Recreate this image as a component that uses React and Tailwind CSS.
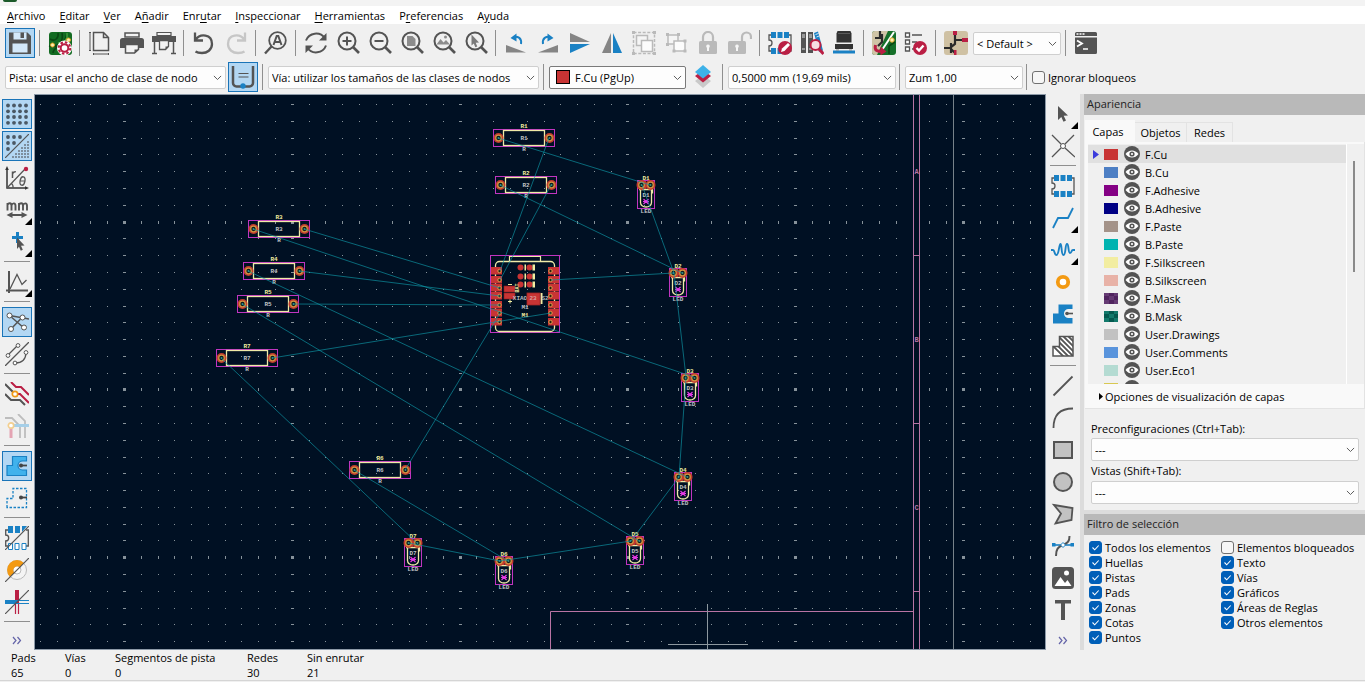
import { useState } from 'react';
import clsx from 'clsx';

const D = '#545454';
const B = '#1a81c4';
const R = '#ba1f44';
const G = '#bababa';

const MENUS = [
  ['', 'A', 'rchivo'],
  ['', 'E', 'ditar'],
  ['', 'V', 'er'],
  ['A', 'ñ', 'adir'],
  ['Enr', 'u', 'tar'],
  ['', 'I', 'nspeccionar'],
  ['', 'H', 'erramientas'],
  ['P', 'r', 'eferencias'],
  ['A', 'y', 'uda'],
];

const magnifier = (
  <>
    <circle cx="11" cy="10" r="8.500" fill="none" stroke={D} strokeWidth="2" />
    <path d="M17 16l6 6" stroke={D} strokeWidth="2.600" />
  </>
);

const footprint = (
  <>
    <path d="M3 4H1v5a3 3 0 0 1 0 6v5h2M21 4h2v16h-2" fill="none" stroke={D} strokeWidth="1.300" />
    <path d="M3 1h5v6H3zM9.500 1h5v6h-5zM16 1h5v6h-5zM3 17h5v6H3zM9.500 17h5v6h-5zM16 17h5v6h-5z" fill={B} />
  </>
);

const zoneShape = 'M2 21.500V11.500H7.500V2.500H21.500V7H17.500a4.500 4.500 0 1 0 0 9H21.500V21.500z';

const ICONS = {
  save: (
    <>
      <path d="M1 1.500h18.500l3.500 3.500v18H1z" fill={D} />
      <path d="M5.500 1.500h13v7h-13zM4.500 12.500h15v9h-15z" fill="#d4e9fa" />
      <path d="M12.500 1.500h3.500v5.500h-3.500z" fill={D} />
    </>
  ),
  board: (
    <>
      <rect width="23" height="23" x="1" y="1" rx="3" fill="#136b22" />
      <path d="M2 8c5 3 9-1 8-6M1 15c8 2 15-4 13-13M5 22c0-7 12-6 14-20" fill="none" stroke="#0b4714" strokeWidth="1.600" />
      <path d="M10 12l6-1 3-4V2" fill="none" stroke="#3fa33c" strokeWidth="1.500" />
      <circle cx="4.500" cy="14" r="2" fill="#fff0b0" stroke="#dca427" />
      <circle cx="20.500" cy="9" r="2" fill="#fff0b0" stroke="#dca427" />
      <circle cx="16.500" cy="17" r="5.500" fill="none" stroke="#fff" strokeWidth="4" />
      <circle cx="16.500" cy="17" r="5.800" fill="none" stroke={R} strokeWidth="2" strokeDasharray="2.500 2" />
      <circle cx="16.500" cy="17" r="3.800" fill="#fff" stroke={R} strokeWidth="2" />
    </>
  ),
  page: (
    <>
      <path d="M5.500 1.500h10l5 5v13h-15zM15.500 1.500v5h5" fill="none" stroke={D} strokeWidth="1.500" />
      <path d="M2 1.500v18M1 1.500h2M1 19.500h2M5.500 23h15M5.500 22v2M20.500 22v2" stroke={D} fill="none" />
    </>
  ),
  print: (
    <>
      <path d="M5 2h14v4H5z" fill="#f2f2f2" stroke={D} strokeWidth="1.500" />
      <path d="M2.500 7h19a2.500 2.500 0 0 1 2.500 2.500V17H0V9.500A2.500 2.500 0 0 1 2.500 7z" fill={D} />
      <path d="M5.500 13.500h13v5l-4 3.500h-9z" fill="#f2f2f2" stroke={D} strokeWidth="1.500" />
      <path d="M18.500 18.500l-4 3.500v-3.500z" fill={D} />
    </>
  ),
  plot: (
    <>
      <path d="M5 1.500h14v3H5z" fill="#f2f2f2" stroke={D} strokeWidth="1.200" />
      <path d="M0 5h24v6H0z" fill={D} />
      <path d="M2.500 11v11M21.500 11v11M0 22.500h5M19 22.500h5" stroke={D} strokeWidth="1.500" />
      <path d="M7.500 9.500h9v6l-3 3h-6z" fill="#f2f2f2" stroke={D} strokeWidth="1.300" />
      <path d="M16.500 15.500l-3 3v-3z" fill={D} />
    </>
  ),
  undo: <path d="M3 1.500v8h8M3.500 9C8 2 20 3 20 13c0 6-5 9-10 9-3 0-5-.5-6.500-1.500" fill="none" stroke={D} strokeWidth="2.300" />,
  redo: <path d="M21 1.500v8h-8M20.500 9C16 2 4 3 4 13c0 6 5 9 10 9 3 0 5-.5 6.500-1.500" fill="none" stroke="#c6c6c6" strokeWidth="2.300" />,
  find: (
    <>
      <circle cx="13.500" cy="9.500" r="8.300" fill="none" stroke={D} strokeWidth="1.800" />
      <path d="M7.500 15.500L1 22.500" stroke={D} strokeWidth="2.400" />
      <path d="M9.500 14l3.200-9h1.600l3.200 9M11 11h5" fill="none" stroke={D} strokeWidth="2" />
    </>
  ),
  refresh: (
    <>
      <path d="M2 9.500C5 1.500 16 0 21 7.500M22 14.500c-3 8-14 9.500-19 2" fill="none" stroke={D} strokeWidth="2" />
      <path d="M22.500 2v7.500H15zM1.500 22v-7.500H9z" fill={D} />
    </>
  ),
  zoomIn: (
    <>
      {magnifier}
      <path d="M6.500 10h9M11 5.500v9" stroke={D} strokeWidth="2" />
    </>
  ),
  zoomOut: (
    <>
      {magnifier}
      <path d="M6.500 10h9" stroke={D} strokeWidth="2" />
    </>
  ),
  zoomPage: (
    <>
      {magnifier}
      <path d="M7 5h5.500l3 3v7H7z" fill="#8c8c8c" />
    </>
  ),
  zoomObjects: (
    <>
      {magnifier}
      <path d="M4.500 13.500L8.500 8l3 3.500L14 9l4 4.500z" fill="#8c8c8c" />
      <circle cx="13.500" cy="6" r="1.500" fill="#8c8c8c" />
    </>
  ),
  zoomSel: (
    <>
      {magnifier}
      <path d="M7.500 3.500l7.500 8-3.300.2 1.600 3.700-2 .8-1.500-3.700-2.300 2z" fill="#7a7a7a" />
    </>
  ),
  rotL: (
    <>
      <path d="M2 14l20 7.500H2z" fill="#858585" />
      <path d="M17 13c1-6-3-8-8-7" fill="none" stroke={B} strokeWidth="2" />
      <path d="M6.500 7l6-4.500v8z" fill={B} />
    </>
  ),
  rotR: (
    <>
      <path d="M22 14L2 21.500h20z" fill="#858585" />
      <path d="M7 13c-1-6 3-8 8-7" fill="none" stroke={B} strokeWidth="2" />
      <path d="M17.500 7l-6-4.500v8z" fill={B} />
    </>
  ),
  mirV: (
    <>
      <path d="M2 2l20 9H2z" fill="#858585" />
      <path d="M2 13h20L2 22z" fill={B} />
    </>
  ),
  mirH: (
    <>
      <path d="M11 2v20H2z" fill="#858585" />
      <path d="M13 2v20h9z" fill={B} />
    </>
  ),
  group: (
    <>
      <path d="M1.500 1.500h21v21h-21z" fill="none" stroke={G} strokeWidth="1.500" strokeDasharray="3 1.600" />
      <path d="M4.500 4.500h11v10h-11z" fill="#f5f5f5" stroke={G} strokeWidth="1.500" />
      <path d="M9.500 9.500h11v11h-11z" fill="#fcfcfc" stroke={G} strokeWidth="1.500" />
      <path d="M0 0h3v3H0zM21 0h3v3h-3zM0 21h3v3H0zM21 21h3v3h-3z" fill={G} />
    </>
  ),
  ungroup: (
    <>
      <path d="M4 4h10v9H4z" fill="#f5f5f5" stroke={G} strokeWidth="1.500" />
      <path d="M10 10h11v10H10z" fill="#fcfcfc" stroke={G} strokeWidth="1.500" />
      <path d="M2 2h3v3H2zM13 2h3v3h-3zM2 12h3v3H2zM19.500 8.500h3v3h-3zM8.500 18.500h3v3h-3zM19.500 18.500h3v3h-3z" fill={G} />
    </>
  ),
  lock: (
    <>
      <path d="M7 11V6a5 5 0 0 1 10 0v5" fill="none" stroke={G} strokeWidth="2.200" />
      <rect x="3" y="10" width="18" height="13" rx="1.500" fill={G} />
      <path d="M12 13.500a1.800 1.800 0 0 1 1 3.300V20h-2v-3.200a1.800 1.800 0 0 1 1-3.300z" fill="#f6f6f6" />
    </>
  ),
  unlock: (
    <>
      <path d="M14 11V6a4.500 4.500 0 0 1 9 0v2" fill="none" stroke={G} strokeWidth="2.200" />
      <rect x="0" y="10" width="18" height="13" rx="1.500" fill={G} />
      <path d="M9 13.500a1.800 1.800 0 0 1 1 3.300V20H8v-3.200a1.800 1.800 0 0 1 1-3.300z" fill="#f6f6f6" />
    </>
  ),
  fpEdit: (
    <>
      {footprint}
      <circle cx="17" cy="17" r="7" fill={R} />
      <path d="M13 21l1-3.500 6-5.500 2 2-5.500 6z" fill="#fff" />
    </>
  ),
  fpLib: (
    <>
      <path d="M1 1h5v21H1zM8 1h5v21H8z" fill={D} />
      <path d="M2 4h3M2 6h3M9 4h3M9 6h3M2 18h3M9 18h3" stroke="#ddd" />
      <path d="M14 2l4-1.500 5 19-4 1.500z" fill={B} />
      <path d="M15.500 3.500l3-1M16.500 6l2.500-1" stroke="#fff" strokeWidth=".8" />
      <circle cx="15.500" cy="14" r="5" fill="#f6dfe4" stroke={R} strokeWidth="2" />
      <path d="M19 18l4.500 5" stroke={R} strokeWidth="3" />
    </>
  ),
  viewer3d: (
    <>
      <path d="M5.500 0h13l1 2.500v9h-15v-9z" fill="#333" />
      <path d="M3 13h18v5H3z" fill="#333" />
      <path d="M6 2.500h12" stroke="#666" strokeWidth=".8" />
      <path d="M1 19.500h22v3H1z" fill={B} />
      <path d="M4 18.500h3v1H4zM17 18.500h3v1h-3z" fill="#888" />
    </>
  ),
  update: (
    <>
      <rect width="24" height="24" rx="3" fill="#15702a" />
      <path d="M3 0h13L5 24H3a3 3 0 0 1-3-3V3a3 3 0 0 1 3-3z" fill="#cfc4a6" />
      <path d="M8 0v7M3 7h6M10 3v8l-4 4" stroke="#2b2b2b" strokeWidth="2.200" fill="none" />
      <path d="M22 1L10 19" stroke="#fff" strokeWidth="2" />
      <path d="M23 11l-6 4v8" fill="none" stroke="#0b4714" strokeWidth="1.600" />
      <circle cx="20" cy="9" r="2.200" fill="#fff0b0" stroke="#dca427" />
      <path d="M3.500 14C2 20 6 20.500 10 20.500" fill="none" stroke={R} strokeWidth="3" />
      <path d="M8.500 15.500l6 5-6 4z" fill={R} />
    </>
  ),
  drc: (
    <>
      <path d="M1.500 2h4v4h-4zM1.500 9h4v4h-4zM1.500 16h4v4h-4z" fill="#fff" stroke={D} strokeWidth="1.300" />
      <path d="M8 4h10M8 11h5M8 18h3" stroke={D} strokeWidth="1.300" />
      <circle cx="16" cy="17" r="7" fill={R} />
      <path d="M12.500 17l2.500 2.500 4.500-5" fill="none" stroke="#fff" strokeWidth="2.400" />
    </>
  ),
  schematic: (
    <>
      <rect width="24" height="24" rx="3" fill="#cfc1a3" />
      <path d="M11 3v6h9M11 8v5l-4 3M0 17h7M7 12v10M7 18l4 4" fill="none" stroke="#2b2b2b" strokeWidth="2.200" />
      <path d="M9 0h4v4H9zM18 7h6v4h-6zM10 19h2.500v5H10z" fill={R} />
    </>
  ),
  console: (
    <>
      <path d="M2.500 1h19A1.500 1.500 0 0 1 23 2.500V5H1V2.500A1.500 1.500 0 0 1 2.500 1zM1 6.500h22v15a1.500 1.500 0 0 1-1.500 1.500h-19A1.500 1.500 0 0 1 1 21.500z" fill={D} />
      <path d="M2.500 3h2M5.500 3h2M8.500 3h2" stroke="#fff" strokeWidth="1.500" />
      <path d="M3 9.500l5 3-5 3" fill="none" stroke="#fff" strokeWidth="1.800" />
      <path d="M9 18h5" stroke="#fff" strokeWidth="1.500" />
    </>
  ),
  autoTrack: (
    <>
      <path d="M2 1v17a3.500 3.500 0 0 0 3.500 3.500h13A3.500 3.500 0 0 0 22 18V1" fill="none" stroke={D} strokeWidth="2.500" />
      <path d="M7.500 8.500h10M7.500 12h10" stroke={D} strokeWidth="1.200" />
      <circle cx="12" cy="21" r="2.700" fill={B} />
    </>
  ),
  layers: (
    <>
      <path d="M12 10l8 6-8 7-8-7z" fill="#c9c9c9" />
      <path d="M12 5l8 6-8 6.500L4 11z" fill={R} />
      <path d="M12 0l8 7-8 6.500L4 7z" fill="#3db1e8" />
    </>
  ),
  grid: [3.5, 9.3, 15, 20.8].map((y) =>
    [3, 9, 15, 21].map((x) => <circle key={`${x}-${y}`} cx={x} cy={y} r="1.900" fill="#4b5864" />)
  ),
  gridOver: (
    <>
      {[[3, 3], [9, 3], [15, 3], [3, 9], [9, 9], [3, 15]].map(([x, y]) => (
        <circle key={`${x}-${y}`} cx={x} cy={y} r="1.900" fill="#4b5864" />
      ))}
      {[0, 1, 2, 3, 4, 5].map((r) =>
        [0, 1, 2, 3, 4, 5].map((c) =>
          c + r > 4 ? (
            <rect key={`f${r}-${c}`} x={7 + c * 3} y={7 + r * 3} width="2" height="2" fill="#7d8e9d" />
          ) : null
        )
      )}
      <path d="M0 24L24 0" stroke={D} strokeWidth="1.200" />
    </>
  ),
  polar: (
    <>
      <path d="M2 3v19h19" fill="none" stroke="#333" strokeWidth="1.500" />
      <path d="M2 0l1.800 4H.2zM24 22l-4 1.800v-3.600z" fill="#333" />
      <path d="M2 22L20 3M6 17a5 5 0 0 1 2 5" fill="none" stroke={D} strokeWidth="1.200" />
      <circle cx="21" cy="3" r="2.200" fill={R} />
      <path d="M7.500 12V5.500M7.500 8c.5-1.800 1.500-2.500 3.300-2.200" fill="none" stroke={D} strokeWidth="1.500" />
      <ellipse cx="17.500" cy="15" rx="2.400" ry="4.300" transform="rotate(12 17.500 15)" fill="none" stroke={D} strokeWidth="1.300" />
      <path d="M15.200 15h4.600" stroke={D} />
    </>
  ),
  mm: (
    <>
      <path d="M2.500 12.500V5M2.500 7c1-2.500 4-2.500 4 .7v4.800M6.500 7.500c1-3 4-2.800 4 .3v4.700M14 12.500V5M14 7c1-2.500 4-2.500 4 .7v4.800M18 7.500c1-3 4-2.800 4 .3v4.700" fill="none" stroke={D} strokeWidth="1.900" />
      <path d="M6 17h12" stroke={D} strokeWidth="2" />
      <path d="M1.500 17l6-3v6zM22.500 17l-6-3v6z" fill={D} />
    </>
  ),
  cursor: (
    <>
      <path d="M12.500 2v11M7 7.500h11" stroke={B} strokeWidth="3" />
      <path d="M12 7.500l7.500 8-3.500.3 1.800 4-2 .9-1.800-4-2 2.300z" fill={D} />
    </>
  ),
  curve: (
    <>
      <path d="M4 1v22M1 20.500h22" stroke={D} strokeWidth="2" />
      <path d="M5 19L12 4.500l5 10 4.500-4.500" fill="none" stroke={D} strokeWidth="1.300" />
    </>
  ),
  ratsnest: (
    <>
      <path d="M4.500 5.500L19 18M17.500 7L6 19M4.500 5.500L24 9" stroke={D} strokeWidth="1.500" />
      <circle cx="4.500" cy="5.500" r="2.500" fill="#fff" stroke={D} />
      <circle cx="17.500" cy="7.500" r="2.500" fill="#fff" stroke={D} />
      <circle cx="6" cy="19" r="2.500" fill="#fff" stroke={D} />
      <circle cx="19" cy="17.500" r="2.500" fill="#fff" stroke={D} />
    </>
  ),
  curvedRats: (
    <>
      <path d="M0 24L24 0M3 13L13 3M10 21c7 0 11-4 11-11" fill="none" stroke={D} strokeWidth="1.300" />
      <circle cx="3" cy="13.500" r="1.900" fill="#fff" stroke={D} />
      <circle cx="13" cy="3.500" r="1.900" fill="#fff" stroke={D} />
      <circle cx="10" cy="21" r="1.900" fill="#fff" stroke={D} />
      <circle cx="21" cy="10.500" r="1.900" fill="#fff" stroke={D} />
    </>
  ),
  highlight: (
    <>
      <path d="M6 0l5 5h5l8 8M10 12h5l9 9" fill="none" stroke={R} strokeWidth="2" />
      <path d="M0 2l9 9M0 12l6 6h9l5 5" fill="none" stroke={D} strokeWidth="2" />
      <circle cx="10" cy="12" r="2.700" fill="#fff" stroke="#f09a16" strokeWidth="1.700" />
    </>
  ),
  dimNets: (
    <>
      <path d="M0 4h7l8 8v12M13 0l7 7v17" fill="none" stroke="#bdbdbd" strokeWidth="1.800" />
      <path d="M7 11.500h17" stroke="#a6cfe8" strokeWidth="3" />
      <path d="M6 13v11" stroke="#e4a4b3" strokeWidth="3" />
      <circle cx="6" cy="11.500" r="2.700" fill="#fff" stroke="#f3cf90" strokeWidth="1.700" />
    </>
  ),
  zoneFill: (
    <>
      <path d={zoneShape} fill="#41b2ec" stroke={B} strokeWidth="1.200" />
      <circle cx="16" cy="11.500" r="2" fill="#444" />
      <path d="M16 11.500h6" stroke="#444" strokeWidth="1.800" />
    </>
  ),
  zoneOutline: (
    <>
      <path d="M2 21.500V12.500H8V2.500h13.500v19z" fill="none" stroke={B} strokeWidth="1.300" strokeDasharray="2.500 1.500" />
      <circle cx="16" cy="11.500" r="2" fill="#444" />
      <path d="M16 11.500h6" stroke="#444" strokeWidth="1.800" />
    </>
  ),
  padSketch: (
    <>
      <path d="M3 4H.7v5a3 3 0 0 1 0 6v5H3M21 4h2.300v16H21" fill="none" stroke={D} strokeWidth="1.300" />
      <path d="M3 0h5v7H3zM10 0h5v7h-5zM17 0h5l-5 6z" fill={B} />
      <path d="M3.500 17.500h4v6h-4zM10 17.500h4v6h-4zM17 17.500h4v6h-4z" fill="#fff" stroke={B} />
      <path d="M0 24L24 0" stroke={D} strokeWidth="1.200" />
    </>
  ),
  viaSketch: (
    <>
      <circle cx="12" cy="12" r="9.500" fill="#f4f4f4" stroke={G} />
      <circle cx="12" cy="12" r="4" fill="#fff" stroke={G} />
      <path d="M5 19A9.700 9.700 0 0 1 19 5l-4.200 4.200a4 4 0 0 0-5.600 5.600z" fill="#f39a13" />
      <path d="M0 24L24 0" stroke={D} strokeWidth="1.200" />
    </>
  ),
  trackSketch: (
    <>
      <path d="M12 0v13" stroke={R} strokeWidth="4" />
      <path d="M10.500 12v12M13.500 12v12" stroke={R} strokeWidth="1.200" />
      <path d="M0 12h12" stroke={B} strokeWidth="4" />
      <path d="M12 10.500h12M12 13.500h12" stroke={B} strokeWidth="1.200" />
      <path d="M0 24L24 0" stroke={D} strokeWidth="1.200" />
    </>
  ),
  select: <path d="M7 4l10 9.500-4.300.3 2.300 4.700-2.500 1.200-2.200-4.800L7 18z" fill={D} />,
  localRats: (
    <>
      <path d="M1 1l9 9M14 14l10 9M23 1l-9 9M10 14l-9 9" stroke={D} strokeWidth="1.300" />
      <circle cx="12" cy="12" r="2.500" fill="#fff" stroke={D} />
    </>
  ),
  footprint,
  route: <path d="M2 22l5-10h10l5-10" fill="none" stroke={B} strokeWidth="1.800" />,
  tune: <path d="M0 12h2c2 0 1 5 3.500 5S8 6 9.500 6s.5 11 3 11S14 6 16 6s1 9 3 9 1-3 3-3h2" fill="none" stroke={B} strokeWidth="1.900" />,
  via: <circle cx="12" cy="12" r="5.200" fill="#fff" stroke="#f39a13" strokeWidth="3.800" />,
  zone: (
    <>
      <path d={zoneShape} fill={B} />
      <circle cx="16" cy="11.500" r="1.800" fill={D} />
      <path d="M16 11.500h6" stroke={D} strokeWidth="1.600" />
    </>
  ),
  ruleArea: (
    <>
      <clipPath id="rule-area">
        <path d="M2 22V12.500h6.500V2.500H22V22z" />
      </clipPath>
      <path d="M2 22V12.500h6.500V2.500H22V22z" fill="#fff" stroke={D} strokeWidth="1.500" />
      <path d="M-10 0l24 24M-5 0l24 24M0 0l24 24M5 0l24 24M10 0l24 24M15 0l24 24" stroke={D} strokeWidth="1.900" clipPath="url(#rule-area)" />
    </>
  ),
  line: <path d="M2.500 21.500l19-19" stroke={D} strokeWidth="1.800" />,
  arc: <path d="M2.500 22C2.500 9 9 2.500 22 2.500" fill="none" stroke={D} strokeWidth="1.800" />,
  rect: <path d="M3 4h18v16H3z" fill="#c2c2c2" stroke={D} strokeWidth="2" />,
  circle: <circle cx="12" cy="12" r="9" fill="#c2c2c2" stroke={D} strokeWidth="2" />,
  poly: <path d="M3 3l18.500 3-1 12L4.500 21.500l5.500-10z" fill="#c2c2c2" stroke={D} strokeWidth="1.800" />,
  bezier: (
    <>
      <path d="M2 11h20" stroke={B} strokeWidth="1.600" />
      <path d="M5 22c0-7 2-9 7-11s6.500-4 6.500-9" fill="none" stroke={D} strokeWidth="2" />
      <path d="M1 9h3.500v3.500H1zM19.500 9H23v3.500h-3.500z" fill={B} />
      <path d="M12 8.500l2.500 2.500-2.500 2.500L9.500 11z" fill="#fff" stroke={B} />
    </>
  ),
  image: (
    <>
      <rect x="1" y="1" width="22" height="22" rx="3.500" fill={D} />
      <path d="M3.500 20l6-9 4.500 6 2.500-3 4 6z" fill="#fff" />
      <circle cx="15.500" cy="7" r="2.500" fill="#fff" />
    </>
  ),
  text: <path d="M4 2h16v3.500h-6V22h-4V5.500H4z" fill={D} />,
  more: <path d="M5 9l3 3.500L5 16M9.500 9l3 3.500-3 3.500" transform="translate(3 -2)" fill="none" stroke="#6464a8" strokeWidth="1.200" />,
};

const TOOLBAR = [
  'save', '|', 'board', '|', 'page', 'print', 'plot', '|', 'undo', 'redo', '|', 'find', '|',
  'refresh', 'zoomIn', 'zoomOut', 'zoomPage', 'zoomObjects', 'zoomSel', '|',
  'rotL', 'rotR', 'mirV', 'mirH', 'group', 'ungroup', 'lock', 'unlock', '|',
  'fpEdit', 'fpLib', 'viewer3d', '|', 'update', 'drc', '|', 'schematic',
];

const LEFT_TOOLS = [
  'grid', 'gridOver', 'polar', 'mm', 'cursor', '|', 'curve', '|', 'ratsnest', 'curvedRats', '|',
  'highlight', 'dimNets', '|', 'zoneFill', 'zoneOutline', '|', 'padSketch', 'viaSketch', 'trackSketch', '|', 'more',
];

const RIGHT_TOOLS = [
  'select', 'localRats', '|', 'footprint', 'route', 'tune', 'via', 'zone', 'ruleArea', '|',
  'line', 'arc', 'rect', 'circle', 'poly', 'bezier', 'image', 'text', 'more',
];

const ACTIVE = ['save', 'autoTrack', 'grid', 'gridOver', 'ratsnest', 'zoneFill'];
const WITH_MENU = ['mm', 'cursor', 'curve', 'select', 'route', 'tune'];

const LAYERS = [
  ['F.Cu', '#c83434'],
  ['B.Cu', '#4d7fc4'],
  ['F.Adhesive', '#840084'],
  ['B.Adhesive', '#000084'],
  ['F.Paste', '#a49389'],
  ['B.Paste', '#00b3b0'],
  ['F.Silkscreen', '#f2eda1'],
  ['B.Silkscreen', '#e8b2a7'],
  ['F.Mask', '#653a73', '#50245f'],
  ['B.Mask', '#12796b', '#04594f'],
  ['User.Drawings', '#c2c2c2'],
  ['User.Comments', '#5994dc'],
  ['User.Eco1', '#b4dbd2'],
  ['', '#d8c852'],
];

const FILTERS = [
  [['Todos los elementos', true], ['Huellas', true], ['Pistas', true], ['Pads', true], ['Zonas', true], ['Cotas', true], ['Puntos', true]],
  [['Elementos bloqueados', false], ['Texto', true], ['Vías', true], ['Gráficos', true], ['Áreas de Reglas', true], ['Otros elementos', true]],
];

const STATS = [
  ['Pads', 65, 'w-[54px]'],
  ['Vías', 0, 'w-[50px]'],
  ['Segmentos de pista', 0, 'w-[132px]'],
  ['Redes', 30, 'w-[60px]'],
  ['Sin enrutar', 21, 'w-[80px]'],
];

// [name, centre x, centre y]
const RESISTORS = [
  ['R1', 524, 138],
  ['R2', 526, 185],
  ['R3', 279, 229],
  ['R4', 274, 271],
  ['R5', 268, 304],
  ['R7', 247, 358],
  ['R6', 380, 470],
];

// [name, centre x, pad row y]
const LEDS = [
  ['D1', 646, 185],
  ['D2', 678, 273],
  ['D3', 690, 378],
  ['D4', 683, 477],
  ['D5', 635, 541],
  ['D6', 504, 561],
  ['D7', 413, 543],
];

const NETS = [
  [498, 138, 650, 185],
  [549, 138, 500, 271],
  [500, 185, 682, 273],
  [551, 185, 500, 280],
  [642, 185, 674, 273],
  [674, 273, 686, 377],
  [686, 377, 679, 477],
  [679, 477, 631, 541],
  [631, 541, 500, 561],
  [500, 561, 409, 543],
  [253, 229, 694, 377],
  [304, 229, 500, 288],
  [248, 271, 687, 477],
  [299, 271, 500, 296],
  [242, 304, 639, 541],
  [293, 304, 500, 305],
  [221, 358, 417, 543],
  [272, 358, 551, 313],
  [354, 470, 508, 561],
  [405, 470, 500, 313],
  [551, 280, 674, 273],
];

const PAD_ROWS = [271, 280, 288, 296, 305, 313, 322];

function Icon({ name }) {
  return (
    <svg viewBox="0 0 24 24" className="w-6 h-6" aria-hidden="true">
      {ICONS[name]}
    </svg>
  );
}

function ToolButton({ name }) {
  return (
    <button
      type="button"
      aria-label={name}
      className={clsx(
        'relative flex items-center justify-center w-[30px] h-[30px] m-px shrink-0 border',
        ACTIVE.includes(name) ? 'bg-[#b3d7f3] border-[#1a74b8]' : 'border-transparent'
      )}
    >
      <Icon name={name} />
      {WITH_MENU.includes(name) && (
        <svg viewBox="0 0 7 7" className="absolute right-[-1px] bottom-[-1px] w-[7px] h-[7px]" aria-hidden="true">
          <path d="M7 0v7H0z" fill="#000" />
        </svg>
      )}
    </button>
  );
}

function Separator({ vertical }) {
  return vertical ? (
    <div className="h-px w-[26px] mt-[3px] mb-1 bg-[#8f8f8f] shrink-0" />
  ) : (
    <div className="w-px h-[26px] ml-[3px] mr-1 bg-[#8f8f8f] shrink-0" />
  );
}

function Tools({ items, vertical }) {
  return items.map((item, i) =>
    item === '|' ? <Separator key={i} vertical={vertical} /> : <ToolButton key={i} name={item} />
  );
}

function Select({ label, value, className, children }) {
  return (
    <div className={clsx('relative shrink-0', className)}>
      {children}
      <select
        aria-label={label}
        className={clsx(
          'block appearance-none w-full h-[23px] pr-5 bg-[#fdfdfd] border rounded-[2px] text-black focus:outline-none',
          children ? 'pl-[25px] border-[#7a7a7a]' : 'pl-[3px] border-[#cfcfcf]'
        )}
      >
        <option>{value}</option>
      </select>
      <svg viewBox="0 0 10 6" className="absolute right-1 top-[9px] w-[9px] h-[6px] pointer-events-none" aria-hidden="true">
        <path d="M1 .7l4 4 4-4" fill="none" stroke="#5c5c5c" strokeWidth="1.100" />
      </svg>
    </div>
  );
}

function Checkbox({ label, checked }) {
  return (
    <label className="relative flex items-center gap-[3px] whitespace-nowrap">
      <input
        type="checkbox"
        defaultChecked={checked}
        className="peer appearance-none w-[13px] h-[13px] shrink-0 rounded-[3px] border border-[#707070] bg-[#f6f6f6] checked:bg-[#005fb8] checked:border-[#005fb8]"
      />
      <svg viewBox="0 0 13 13" className="hidden peer-checked:block absolute left-0 w-[13px] h-[13px] pointer-events-none" aria-hidden="true">
        <path d="M3.500 6.500l2.200 2.300 4-4.300" fill="none" stroke="#fff" strokeWidth="1.100" />
      </svg>
      {label}
    </label>
  );
}

function GridDots() {
  const dots = [];
  const step = 16.78;
  for (let c = -5; c < 100; c++) {
    for (let r = -7; r < 60; r++) {
      const x = Math.round(124 + c * step);
      const y = Math.round(221.6 + r * step);
      const w = c % 10 === 0 ? 3 : 1;
      const h = r % 10 === 0 ? 3 : 1;
      dots.push(`M${x - (w - 1) / 2} ${y - (h - 1) / 2}h${w}v${h}h-${w}z`);
    }
  }
  return <path d={dots.join('')} fill="#87929a" />;
}

function Pad({ x, y }) {
  return (
    <>
      <circle cx={x} cy={y} r="5" fill="#c23a2e" />
      <circle cx={x} cy={y} r="2.800" fill="#0a1a20" stroke="#cf9440" strokeWidth="1.300" />
      <circle cx={x} cy={y} r="1" fill="#3c8f7c" />
    </>
  );
}

function Resistor({ name, x, y }) {
  return (
    <g>
      <rect x={x - 30.5} y={y - 8.5} width="61" height="17" fill="none" stroke="#c035c0" />
      <rect x={x - 20.5} y={y - 7.5} width="41" height="15" fill="none" stroke="#f0eba8" strokeWidth="1.300" />
      <Pad x={x - 25.5} y={y} />
      <Pad x={x + 25.5} y={y} />
      <text x={x} y={y - 10} fill="#f2eda1">{name}</text>
      <text x={x} y={y + 2} fill="#c0c4c8">{name}</text>
      <text x={x} y={y + 13} fill="#c0c4c8">R</text>
    </g>
  );
}

function Led({ name, x, y }) {
  return (
    <g>
      <rect x={x - 8.5} y={y - 4.5} width="17" height="28" fill="none" stroke="#c035c0" />
      <path d={`M${x - 5.5} ${y + 4}v13.500a5.500 4.500 0 0 0 11 0V${y + 4}M${x - 7} ${y + 4.5}h13.500v4`} fill="none" stroke="#f0eba8" strokeWidth="1.300" />
      <rect x={x - 8} y={y - 4} width="8" height="8" fill="#c23a2e" />
      <Pad x={x - 4.5} y={y} />
      <Pad x={x + 4.5} y={y} />
      <text x={x} y={y + 12} fill="#c0c4c8">{name}</text>
      <path d={`M${x - 2.5} ${y + 14}l5 5M${x + 2.5} ${y + 14}l-5 5M${x - 3} ${y + 16.5}h6`} stroke="#e43be4" strokeWidth="1.200" />
      <text x={x} y={y - 5} fill="#f2eda1">{name}</text>
      <text x={x} y={y + 28} fill="#c0c4c8">LED</text>
    </g>
  );
}

function Module() {
  return (
    <g>
      <rect x="490.500" y="255.500" width="69" height="77" fill="none" stroke="#c035c0" />
      <rect x="495.500" y="261.500" width="59" height="70" rx="4" fill="none" stroke="#f0eba8" strokeWidth="1.300" />
      <path d="M509.500 261v-4.500h31v4.500" fill="none" stroke="#f0eba8" strokeWidth="1.200" />
      {PAD_ROWS.map((y) => (
        <g key={y}>
          <rect x="491" y={y - 4} width="11" height="7.500" fill="#c83434" />
          <rect x="548" y={y - 4} width="11" height="7.500" fill="#c83434" />
          <circle cx="499.500" cy={y} r="1.700" fill="#2b1a10" stroke="#e0a04a" />
          <circle cx="550.500" cy={y} r="1.700" fill="#2b1a10" stroke="#e0a04a" />
        </g>
      ))}
      {[267.5, 276.5, 284.5].map((y) => (
        <g key={y}>
          <circle cx="520.500" cy={y} r="3" fill="#c83434" />
          <circle cx="529.500" cy={y} r="3" fill="#c83434" />
          <path d={`M524.500 ${y - 3}h1.500v6h-1.500zM532.500 ${y - 3}h2.500v6h-2.500z`} fill="#f2eda1" />
        </g>
      ))}
      <path d="M504 286h11v6h-11zM504 293h11v6h-11z" fill="#c83434" stroke="#8f2020" strokeWidth=".6" />
      <path d="M508 284.500h4M508 301.500h4M510 299.500v4" stroke="#f2eda1" />
      <path d="M541.500 293v11" stroke="#f2eda1" strokeWidth="2" />
      <text x="517" y="290" fill="#f2eda1" fontSize="5" transform="rotate(-90 517 288)">BAT</text>
      <text x="520" y="300" fill="#b4b9bd">XIAO</text>
      <rect x="527" y="293" width="13" height="12" fill="#c83434" stroke="#a02626" strokeWidth=".8" />
      <text x="533" y="300" fill="#d9a0a0">23</text>
      <text x="545" y="300" fill="#b4b9bd">S2</text>
      <text x="525" y="309" fill="#c0c4c8">M1</text>
      <text x="525" y="317" fill="#f2eda1">M1</text>
    </g>
  );
}

function Board() {
  return (
    <svg className="block w-full h-full" aria-label="PCB">
      <g
        transform="translate(-35 -95)"
        fontFamily="'Liberation Mono', monospace"
        fontSize="6"
        fontWeight="bold"
        textAnchor="middle"
      >
        <GridDots />
        <path
          d="M913.500 95V650M919.500 95V650M913.500 255.500h6M913.500 423.500h6M913.500 591.500h6M550.500 650V611.500H913.500"
          fill="none"
          stroke="#b974a4"
        />
        <path d="M953.500 95V650" stroke="#77828a" />
        <g fill="#b974a4" fontSize="7">
          <text x="916.500" y="174">A</text>
          <text x="916.500" y="342">B</text>
          <text x="916.500" y="510">C</text>
        </g>
        {RESISTORS.map(([name, x, y]) => (
          <Resistor key={name} name={name} x={x} y={y} />
        ))}
        {LEDS.map(([name, x, y]) => (
          <Led key={name} name={name} x={x} y={y} />
        ))}
        <Module />
        <g stroke="#0e98a8" strokeOpacity=".65">
          {NETS.map(([x1, y1, x2, y2]) => (
            <line key={`${x1}-${y1}-${x2}`} x1={x1} y1={y1} x2={x2} y2={y2} />
          ))}
        </g>
        <path d="M707.500 604V650M668 644.500h80" stroke="#8d989f" />
      </g>
    </svg>
  );
}

function Eye() {
  return (
    <svg viewBox="0 0 16 16" className="w-4 h-4" aria-hidden="true">
      <circle cx="8" cy="8" r="8" fill="#545454" />
      <path d="M1.500 8C5 3.300 11 3.300 14.500 8 11 12.700 5 12.700 1.500 8z" fill="#fff" />
      <circle cx="8" cy="8" r="2.600" fill="#545454" />
      <circle cx="8" cy="8" r="1.100" fill="#fff" />
    </svg>
  );
}

function Swatch({ color, check }) {
  return (
    <svg viewBox="0 0 14 11" className="w-[14px] h-[11px]" aria-hidden="true">
      <rect width="14" height="11" fill={color} />
      {check && <path d="M5 0h5v3H5zM0 3h5v4H0zM10 3h4v4h-4zM5 7h5v4H5z" fill={check} />}
    </svg>
  );
}

function LayerList({ active, onSelect }) {
  return (
    <div className="flex h-60 pl-[3px] overflow-hidden">
      <ul className="flex-1 h-full pt-px overflow-hidden bg-[#f0f0f0]">
        {LAYERS.map(([name, color, check]) => (
          <li key={color}>
            <button
              type="button"
              onClick={() => onSelect(name)}
              className={clsx('flex items-center w-full h-[18px] pl-[5px]', active === name && 'bg-[#e0e0e0]')}
            >
              <span className="w-[11px]">
                {active === name && (
                  <svg viewBox="0 0 6 9" className="w-[6px] h-[9px]" aria-hidden="true">
                    <path d="M0 0l6 4.500L0 9z" fill="#3c3cdc" />
                  </svg>
                )}
              </span>
              <Swatch color={color} check={check} />
              <span className="ml-[6px] mr-[5px]">
                <Eye />
              </span>
              {name}
            </button>
          </li>
        ))}
      </ul>
      <div className="w-[18px] pl-[6px] pt-[17px] bg-[#f0f0f0] border-l border-white">
        <div className="w-[2px] h-[111px] bg-[#8a8a8a]" />
      </div>
    </div>
  );
}

function PanelTitle({ children }) {
  return <h2 className="h-[21px] pl-[3px] leading-5 bg-[#b9b9b9] text-[#222]">{children}</h2>;
}

function AppearancePanel() {
  const [tab, setTab] = useState('Capas');
  const [layer, setLayer] = useState('F.Cu');

  return (
    <aside className="w-[285px] shrink-0 border-l-4 border-[#dcdcdc] bg-[#f0f0f0]">
      <PanelTitle>Apariencia</PanelTitle>
      <div role="tablist" className="flex items-end h-[27px] pl-px">
        {[['Capas', 'w-[50px]'], ['Objetos', 'w-[52px]'], ['Redes', 'w-[46px]']].map(([name, width]) => (
          <button
            key={name}
            type="button"
            role="tab"
            aria-selected={tab === name}
            onClick={() => setTab(name)}
            className={clsx(
              'text-center',
              width,
              tab === name ? 'h-[22px] bg-[#f9f9f9] pr-1' : 'h-5 border-t border-r border-[#e3e3e3]'
            )}
          >
            {name}
          </button>
        ))}
      </div>
      <div className="ml-px pt-[2px] bg-[#f9f9f9] border-r border-b border-[#e3e3e3]">
        <LayerList active={layer} onSelect={setLayer} />
        <button type="button" className="flex items-center gap-[2px] h-6 pl-[14px]">
          <svg viewBox="0 0 4 7" className="w-1 h-[7px]" aria-hidden="true">
            <path d="M0 0l4 3.500L0 7z" fill="#000" />
          </svg>
          Opciones de visualización de capas
        </button>
      </div>
      <div className="pl-[7px] pr-[6px] pt-[11px] pb-[6px]">
        <div className="h-[18px] leading-[18px]">Preconfiguraciones (Ctrl+Tab):</div>
        <Select label="Preconfiguraciones (Ctrl+Tab)" value="---" />
        <div className="h-5 leading-5">Vistas (Shift+Tab):</div>
        <Select label="Vistas (Shift+Tab)" value="---" />
      </div>
      <div className="h-1 bg-[#dcdcdc]" />
      <PanelTitle>Filtro de selección</PanelTitle>
      <div className="flex pl-[5px] pt-[5px]">
        {FILTERS.map((col, i) => (
          <div key={i} className="w-[132px]">
            {col.map(([label, checked]) => (
              <div key={label} className="h-[15px] flex items-center">
                <Checkbox label={label} checked={checked} />
              </div>
            ))}
          </div>
        ))}
      </div>
    </aside>
  );
}

function App() {
  return (
    <div className="h-screen flex flex-col overflow-hidden bg-[#f0f0f0] text-black text-[11px] leading-[15px] font-['Open_Sans','Noto_Sans',sans-serif]">
      <div className="h-[6px] shrink-0 bg-[#f3f3f3] pl-[3px]">
        <div className="w-[14px] h-[2px] rounded-b bg-[#1c5a2a]" />
      </div>
      <nav className="flex items-center gap-[14px] h-[18px] pl-[7px] shrink-0 bg-white">
        {MENUS.map(([pre, key, post]) => (
          <button key={key + post} type="button">
            {pre}
            <u className="underline-offset-2">{key}</u>
            {post}
          </button>
        ))}
      </nav>
      <div className="flex items-center h-9 pl-1 pt-[2px] shrink-0">
        <Tools items={TOOLBAR} />
        <Select label="Variante" value="< Default >" className="w-[88px] ml-px" />
        <div className="w-px" />
        <Separator />
        <ToolButton name="console" />
      </div>
      <div className="flex items-center h-[34px] pl-[5px] shrink-0">
        <Select label="Pista" value="Pista: usar el ancho de clase de nodo" className="w-[221px]" />
        <div className="w-px" />
        <ToolButton name="autoTrack" />
        <Separator />
        <Select label="Vía" value="Vía: utilizar los tamaños de las clases de nodos" className="w-[271px] ml-px" />
        <div className="w-px" />
        <Separator />
        <Select label="Capa" value="F.Cu (PgUp)" className="w-[137px] ml-px">
          <span className="absolute left-[7px] top-1 w-[14px] h-[14px] bg-[#c83434] border border-black" />
        </Select>
        <div className="w-px" />
        <ToolButton name="layers" />
        <Separator />
        <Select label="Rejilla" value="0,5000 mm (19,69 mils)" className="w-[168px] ml-px" />
        <Separator />
        <Select label="Zum" value="Zum 1,00" className="w-[118px] ml-px" />
        <Separator />
        <div className="ml-px">
          <Checkbox label="Ignorar bloqueos" />
        </div>
      </div>
      <div className="flex flex-1 min-h-0">
        <div className="flex flex-col items-center w-[34px] pt-1 shrink-0 overflow-hidden">
          <Tools items={LEFT_TOOLS} vertical />
        </div>
        <main className="flex-1 min-w-0 bg-[#001023] border border-[#8d9aa8]">
          <Board />
        </main>
        <div className="flex flex-col items-center w-[34px] pt-1 shrink-0 overflow-hidden">
          <Tools items={RIGHT_TOOLS} vertical />
        </div>
        <AppearancePanel />
      </div>
      <footer className="flex h-[31px] mb-px pl-[11px] border-b border-[#d5d5d5] shrink-0">
        {STATS.map(([label, value, width]) => (
          <div key={label} className={clsx('whitespace-nowrap', width)}>
            <div>{label}</div>
            <div>{value}</div>
          </div>
        ))}
      </footer>
    </div>
  );
}

export default App;
